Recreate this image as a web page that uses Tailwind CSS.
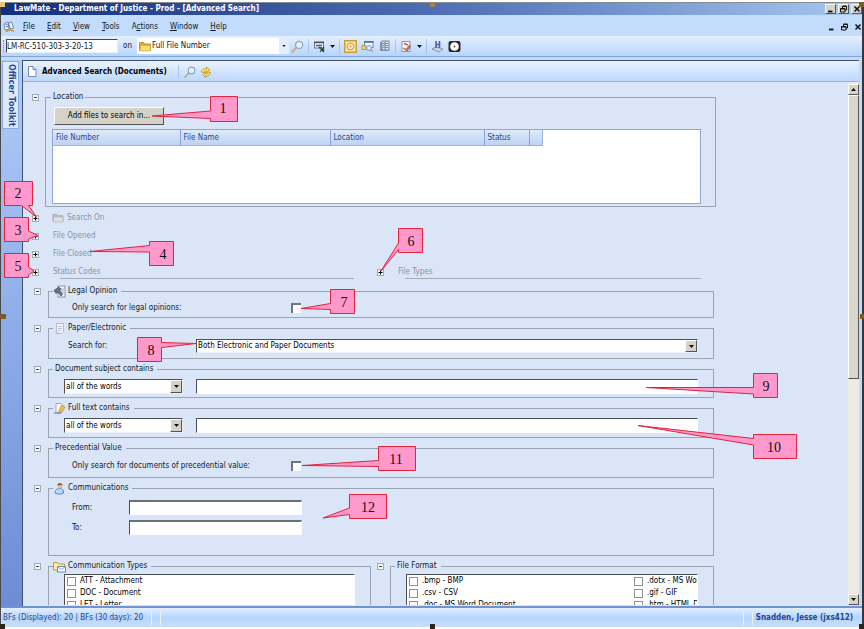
<!DOCTYPE html>
<html lang="en">
<head>
<meta charset="utf-8">
<title>LawMate - Advanced Search</title>
<script src="https://cdn.jsdelivr.net/npm/@tailwindcss/browser@4"></script>
</head>
<body class="relative flex h-screen flex-col overflow-hidden bg-white pt-[2px] pb-[2px] font-['DejaVu_Sans_Condensed','DejaVu_Sans',sans-serif] text-[8px] leading-[12px] text-[#111827]">

<svg class="hidden">
  <symbol id="minus" viewBox="0 0 7 7"><rect x=".5" y=".5" width="6" height="6" fill="#f4f6f8" stroke="#a3abb8"/><path d="M2 3.5h3" stroke="#444"/></symbol>
  <symbol id="plus" viewBox="0 0 7 7"><rect x=".5" y=".5" width="6" height="6" fill="#f4f6f8" stroke="#a3abb8"/><path d="M1.500 3.500h4M3.500 1.500v4" stroke="#000"/></symbol>
  <symbol id="folder" viewBox="0 0 12 11"><path d="M.5 9.500v-8h4l1 1.500h6v6.500z" fill="#e3a92c" stroke="#c2922f"/><path d="M1 10l.8-5.500h9.700L11 10z" fill="#ffdf78" stroke="#d9a83f" stroke-width=".7"/></symbol>
  <symbol id="lens" viewBox="0 0 12 12"><path d="M1 11l4-4" stroke="#c7b299" stroke-width="2" stroke-linecap="round"/><circle cx="7.500" cy="4.500" r="3.300" fill="#e6f3ff" stroke="#86a3cc" stroke-width="1.200"/></symbol>
  <symbol id="down" viewBox="0 0 5 3"><path d="M0 0h5L2.500 3z" fill="#111"/></symbol>
  <symbol id="restore" viewBox="0 0 8 8"><path d="M2.500 3V1.500h4v3.500H5M2.500 1h4" fill="none" stroke="#111"/><path d="M.5 3.500h4.500v3.500h-4.500zM.5 4h4.500" fill="none" stroke="#111"/></symbol>
  <symbol id="close" viewBox="0 0 8 8"><path d="M1.500 1.500l5 5M6.500 1.500l-5 5" stroke="#111" stroke-width="1.500"/></symbol>
  <symbol id="min" viewBox="0 0 8 8"><path d="M1 6.500h4.500" stroke="#111" stroke-width="1.800"/></symbol>
</svg>

<div class="flex min-h-0 flex-1 flex-col border-t border-r-2 border-l border-t-[#8a8a8a] border-r-[#33383f] border-l-[#4a4a4a] bg-[#c3daf9]">

  <header class="flex h-[12px] shrink-0 items-center justify-between bg-linear-to-r from-[#12307c] via-[#4d6db5] to-[#a9c8f0] pl-[13px]">
    <h1 class="font-bold text-white">LawMate - Department of Justice - Prod - [Advanced Search]</h1>
    <div class="flex gap-[2px]">
      <button aria-label="Minimize" class="flex h-[10px] w-[11px] items-center justify-center border border-[#f6f5f0] border-r-[#555] border-b-[#555] bg-[#d6d3ca]"><svg class="size-[8px]"><use href="#min"/></svg></button>
      <button aria-label="Restore" class="flex h-[10px] w-[11px] items-center justify-center border border-[#f6f5f0] border-r-[#555] border-b-[#555] bg-[#d6d3ca]"><svg class="size-[8px]"><use href="#restore"/></svg></button>
      <button aria-label="Close" class="flex h-[10px] w-[11px] items-center justify-center border border-[#f6f5f0] border-r-[#555] border-b-[#555] bg-[#d6d3ca]"><svg class="size-[8px]"><use href="#close"/></svg></button>
    </div>
  </header>

  <nav class="flex h-[21px] shrink-0 items-center gap-3 bg-[#c3dcfb] pt-[2px] pl-[2px]">
    <svg class="-mr-1 size-[12px]" viewBox="0 0 12 12"><path d="M1 3l4-2 1 7-4 1zM5.500 2l3-1 2 6-3 1z" fill="#fff" stroke="#4d699f" stroke-width=".8"/><path d="M2.500 4l2-.5M3 6l2-.5" stroke="#3568bd"/><path d="M3 10.500l4-2 4 2" fill="none" stroke="#c69c35" stroke-width="1.500"/></svg>
    <a href="#"><u>F</u>ile</a><a href="#"><u>E</u>dit</a><a href="#"><u>V</u>iew</a><a href="#"><u>T</u>ools</a><a href="#">A<u>c</u>tions</a><a href="#"><u>W</u>indow</a><a href="#"><u>H</u>elp</a>
    <div class="ml-auto flex gap-[5px]">
      <button aria-label="Minimize document"><svg class="size-[8px]"><use href="#min"/></svg></button>
      <button aria-label="Restore document"><svg class="size-[8px]"><use href="#restore"/></svg></button>
      <button aria-label="Close document"><svg class="size-[8px]"><use href="#close"/></svg></button>
    </div>
  </nav>

  <div class="flex h-[21px] shrink-0 items-center border-b border-[#7ba4e0] bg-linear-to-b from-[#e4f0ff] to-[#b9d5fa] pl-[2px]">
    <span class="mr-[2px] h-3 border-l border-dotted border-[#6f8fc4]"></span>
    <input aria-label="File number" value="LM-RC-510-303-3-20-13" class="h-[14px] w-[112px] border border-t-[#444] border-r-[#e8eef8] border-b-[#e8eef8] border-l-[#444] bg-white px-0">
    <label for="numtype" class="mx-[5px]">on</label>
    <div class="relative flex h-[16px] w-[152px] items-center bg-white pl-[2px]">
      <svg class="mr-[1px] h-[11px] w-[12px]"><use href="#folder"/></svg>
      <select id="numtype" class="flex-1 appearance-none bg-transparent"><option>Full File Number</option></select>
      <span class="pointer-events-none absolute right-0 flex h-full w-[10px] items-center justify-center bg-[#e2eefd]"><svg class="h-[2px] w-[4px]"><use href="#down"/></svg></span>
    </div>
    <div class="ml-[2px] flex items-center gap-[4px]">
      <button aria-label="Search" class="block"><svg class="size-[13px]"><use href="#lens"/></svg></button>
      <span class="h-[14px] w-px bg-[#a9c4ea]"></span>
      <button aria-label="Find options" class="block"><svg class="size-[13px]" viewBox="0 0 13 13"><rect x="1.500" y="2" width="9" height="6" fill="#eef4fb" stroke="#677589"/><path d="M1 2.500h10M3 5.500h6" stroke="#4b5868" stroke-width="1.500"/><path d="M6 7l5 5M11 7l-4 5M8 7v4M10.500 8v4" stroke="#32453a" stroke-width="1.200"/></svg></button>
      <svg class="h-[3px] w-[5px]"><use href="#down"/></svg>
      <span class="h-[14px] w-px bg-[#a9c4ea]"></span>
      <button aria-label="Target" class="block"><svg class="size-[13px]" viewBox="0 0 13 13"><rect x=".8" y=".8" width="11.400" height="11.400" fill="#fff3cf" stroke="#d6962d" stroke-width="1.500"/><circle cx="6.500" cy="6.500" r="3.300" fill="none" stroke="#e8a034" stroke-width="1.300"/><circle cx="6.500" cy="6.500" r="1" fill="#d88922"/></svg></button>
      <button aria-label="Find in window" class="block"><svg class="size-[13px]" viewBox="0 0 13 13"><rect x="3.500" y="1.500" width="8.500" height="6" fill="#f8fbff" stroke="#6a86bd"/><path d="M3 2h9.500" stroke="#4168b4" stroke-width="1.500"/><path d="M1 5.500h4v4H1z" fill="#f5d35b" stroke="#b28b22" stroke-width=".8"/><path d="M9 9l3 3" stroke="#c7a677" stroke-width="1.500"/><circle cx="8" cy="8" r="2.500" fill="#d9ecff" stroke="#7997c4"/></svg></button>
      <button aria-label="Records" class="block"><svg class="size-[13px]" viewBox="0 0 13 13"><rect x="2" y="2" width="8" height="9" fill="#8594aa"/><rect x="4" y="1" width="7" height="9" fill="#dce5f0" stroke="#76859c"/><path d="M5 3.500h5M5 5.500h5M5 7.500h5M7 1v9" stroke="#7d8ca3"/></svg></button>
      <span class="h-[14px] w-px bg-[#a9c4ea]"></span>
      <button aria-label="Tasks" class="block"><svg class="size-[13px]" viewBox="0 0 13 13"><rect x="2" y="1.500" width="8" height="10" fill="#f6f8fc" stroke="#8a94a8"/><path d="M4 3.500l4 1.500M3.500 8l2.500 2 4-5" fill="none" stroke="#d5592f" stroke-width="1.500"/><path d="M6.500 11.500l4-5" stroke="#4d78bf" stroke-width="1.200"/></svg></button>
      <svg class="h-[3px] w-[5px]"><use href="#down"/></svg>
      <span class="h-[14px] w-px bg-[#a9c4ea]"></span>
      <button aria-label="Hummingbird" class="block"><svg class="size-[13px]" viewBox="0 0 13 13"><path d="M1 9l4-2 7 2-4 3z" fill="#cfd5df" stroke="#7e8796" stroke-width=".8"/><path d="M5 1v7M8.500 1v7M5 4.500h3.500" stroke="#5c58a8" stroke-width="1.600"/></svg></button>
      <button aria-label="Clock" class="block"><svg class="size-[13px]" viewBox="0 0 13 13"><rect x=".5" y="1" width="12" height="11" rx="2" fill="#2d2d2d"/><circle cx="6.500" cy="6.500" r="4.300" fill="#fff"/><circle cx="6.500" cy="6.500" r="1" fill="#555"/></svg></button>
    </div>
  </div>

  <div class="flex min-h-0 flex-1 border-b-2 border-[#6f93d3] pt-[3px] pr-[3px]">
    <aside class="w-[21px] shrink-0 bg-linear-to-b from-[#b0ccfa] to-[#6c8dd5] pl-px">
      <button class="mt-px flex h-[68px] w-[17px] items-start justify-center border border-[#8eabdc] bg-[#dceafd] pt-[2px] text-[#2b4a8e]"><span class="[writing-mode:vertical-rl] font-['DejaVu_Sans',sans-serif] font-bold">Officer Toolkit</span></button>
    </aside>

    <main class="flex min-w-0 flex-1 flex-col border-t border-l border-[#40516f] bg-[#dae6f7]">
      <div class="flex h-[21px] shrink-0 items-center border-b border-[#8db4ea] bg-linear-to-b from-[#eaf3ff] to-[#bcd8fc] pt-px pl-[4px]">
        <svg class="mr-[5px] h-[11px] w-[10px]" viewBox="0 0 10 11"><path d="M1.500.5h4.500l3 3v7h-7.500z" fill="#fff" stroke="#7d8ba5"/><path d="M6 .5v3h3" fill="none" stroke="#7d8ba5"/></svg>
        <h2 class="font-bold text-black">Advanced Search (Documents)</h2>
        <span class="mr-[5px] ml-[11px] h-[13px] w-px bg-[#a9c4ea]"></span>
        <button aria-label="Run search" class="mr-[4px] block"><svg class="size-[12px]"><use href="#lens"/></svg></button>
        <button aria-label="Refresh" class="block"><svg class="size-[12px]" viewBox="0 0 12 12"><path d="M1.500 6a4 4 0 0 1 5-3.500V1l3.500 3-3.500 2.500V5A2 2 0 0 0 4 7z" fill="#ffdb5c" stroke="#b88a2b" stroke-width=".7"/><path d="M10.500 6.500a4 4 0 0 1-5 3.500v1.500L2.500 8.500 5.500 6v1.500A2 2 0 0 0 8 6z" fill="#ffd95c" stroke="#b88a2b" stroke-width=".7"/></svg></button>
      </div>

      <div class="flex min-h-0 flex-1">
        <form class="flex min-w-0 flex-1 flex-col gap-1 overflow-hidden pt-[9px] pr-[132px] pl-[9px]">

          <section class="flex items-start gap-[6px]">
            <button type="button" aria-label="Collapse Location" class="mt-[3px] block"><svg class="size-[7px]"><use href="#minus"/></svg></button>
            <fieldset class="min-w-0 flex-1 border border-[#9aa3b3]">
              <legend class="ml-[5px] h-3 px-[2px]">Location</legend>
              <div class="px-[6px] pt-[4px] pb-[2px] pr-[14px]">
                <button type="button" class="ml-[2px] h-[18px] w-[110px] border border-t-white border-r-[#555] border-b-[#555] border-l-white bg-[#d5d2c8] text-black">Add files to search in...</button>
                <div class="mt-[4px] h-[75px] border border-[#8fa6cf] bg-white">
                  <table class="w-[490px] table-fixed border-r border-b border-[#9db5dc] bg-linear-to-b from-[#dfeafa] to-[#bdd2f2] text-left text-[#24479a]">
                    <thead><tr class="h-[15px]">
                      <th class="w-[127px] pt-px pl-[3px] font-normal">File Number</th>
                      <th class="w-[150px] border-l border-[#86a2d2] pt-px pl-[3px] font-normal">File Name</th>
                      <th class="w-[154px] border-l border-[#86a2d2] pt-px pl-[3px] font-normal">Location</th>
                      <th class="w-[45px] border-l border-[#86a2d2] pt-px pl-[3px] font-normal">Status</th>
                      <th class="border-l border-[#86a2d2]"></th>
                    </tr></thead>
                  </table>
                </div>
              </div>
            </fieldset>
          </section>

          <div class="flex flex-col gap-[6px] pt-px pb-[2px] text-[#8a93a1]">
            <div class="flex items-center"><button type="button" aria-label="Expand Search On" class="mr-[13px] block"><svg class="size-[7px]"><use href="#plus"/></svg></button><svg class="mr-[3px] h-[10px] w-[12px] grayscale opacity-70"><use href="#folder"/></svg>Search On</div>
            <div class="flex items-center gap-[14px]"><button type="button" aria-label="Expand File Opened" class="block"><svg class="size-[7px]"><use href="#plus"/></svg></button>File Opened</div>
            <div class="flex items-center gap-[14px]"><button type="button" aria-label="Expand File Closed" class="block"><svg class="size-[7px]"><use href="#plus"/></svg></button>File Closed</div>
            <div class="grid grid-cols-2">
              <div class="pr-5">
                <div class="flex items-center gap-[14px]"><button type="button" aria-label="Expand Status Codes" class="block"><svg class="size-[7px]"><use href="#plus"/></svg></button>Status Codes</div>
                <hr class="ml-7 border-[#a3adbd]">
              </div>
              <div class="pr-[15px] pl-[3px]">
                <div class="flex items-center gap-[14px]"><button type="button" aria-label="Expand File Types" class="block"><svg class="size-[7px]"><use href="#plus"/></svg></button>File Types</div>
                <hr class="ml-7 border-[#a3adbd]">
              </div>
            </div>
          </div>

          <section class="flex items-start gap-[7px] px-[2px]">
            <button type="button" aria-label="Collapse Legal Opinion" class="mt-[3px] block"><svg class="size-[7px]"><use href="#minus"/></svg></button>
            <fieldset class="min-w-0 flex-1 border border-[#9aa3b3]">
              <legend class="ml-[4px] flex h-3 items-center gap-[2px] pr-1"><svg class="size-[13px]" viewBox="0 0 13 13"><rect x="5" y="1" width="7" height="11" fill="#f4f7fb" stroke="#8795aa"/><path d="M7 4h4M7 6h4M7 8h4" stroke="#9cadc5"/><path d="M1 5.500l5-3.500 2 2.500-1.500 1 3 4-1.500 1.500-3-4-2 1.500z" fill="#68717e" stroke="#3f4854" stroke-width=".7"/></svg>Legal Opinion</legend>
              <div class="flex items-center pt-[5px] pb-[3px] pl-[23px]"><label for="legal" class="w-[219px]">Only search for legal opinions:</label><input id="legal" type="checkbox" class="size-[10px] appearance-none border-t-2 border-l-2 border-[#70757c] bg-white"></div>
            </fieldset>
          </section>

          <section class="flex items-start gap-[7px] px-[2px]">
            <button type="button" aria-label="Collapse Paper/Electronic" class="mt-[3px] block"><svg class="size-[7px]"><use href="#minus"/></svg></button>
            <fieldset class="min-w-0 flex-1 border border-[#9aa3b3]">
              <legend class="ml-[4px] flex h-3 items-center gap-[2px] pr-1"><svg class="size-[13px]" viewBox="0 0 13 13"><path d="M3.500 1.500h7v8l-2 2h-5z" fill="#f7f6fd" stroke="#b6b5d4"/><path d="M5 4.500h4M5 6.500h4M5 8.500h3" stroke="#bbb9da"/><path d="M2 10h4" stroke="#d7c5dc"/></svg>Paper/Electronic</legend>
              <div class="flex items-center py-[5px] pr-[15px] pl-[19px]"><label for="paper" class="w-[128px]">Search for:</label>
                <div class="relative flex h-[14px] flex-1 border border-t-[#4b4f56] border-r-[#edf1f7] border-b-[#edf1f7] border-l-[#4b4f56] bg-white"><select id="paper" class="w-full appearance-none pl-px text-black"><option>Both Electronic and Paper Documents</option></select><span class="pointer-events-none absolute inset-y-0 right-0 flex w-[12px] items-center justify-center border border-t-white border-r-[#555] border-b-[#555] border-l-white bg-[#d5d2c8]"><svg class="h-[3px] w-[5px]"><use href="#down"/></svg></span></div>
              </div>
            </fieldset>
          </section>

          <section class="flex items-start gap-[7px] px-[2px]">
            <button type="button" aria-label="Collapse Document subject" class="mt-[3px] block"><svg class="size-[7px]"><use href="#minus"/></svg></button>
            <fieldset class="min-w-0 flex-1 border border-[#9aa3b3]">
              <legend class="ml-[4px] h-3 pr-1 pl-[2px]">Document subject contains</legend>
              <div class="flex items-center gap-[13px] pt-[4px] pb-[3px] pr-[15px] pl-[15px]">
                <div class="relative flex h-[15px] w-[119px] border border-t-[#4b4f56] border-r-[#edf1f7] border-b-[#edf1f7] border-l-[#4b4f56] bg-white"><select aria-label="Subject match" class="w-full appearance-none pl-px text-black"><option>all of the words</option></select><span class="pointer-events-none absolute inset-y-0 right-0 flex w-[12px] items-center justify-center border border-t-white border-r-[#555] border-b-[#555] border-l-white bg-[#d5d2c8]"><svg class="h-[3px] w-[5px]"><use href="#down"/></svg></span></div>
                <input aria-label="Document subject words" class="h-[15px] min-w-0 flex-1 border border-t-[#4b4f56] border-r-white border-b-white border-l-[#4b4f56] bg-white">
              </div>
            </fieldset>
          </section>

          <section class="flex items-start gap-[7px] px-[2px]">
            <button type="button" aria-label="Collapse Full text" class="mt-[3px] block"><svg class="size-[7px]"><use href="#minus"/></svg></button>
            <fieldset class="min-w-0 flex-1 border border-[#9aa3b3]">
              <legend class="ml-[4px] flex h-3 items-center gap-[2px] pr-1"><svg class="size-[13px]" viewBox="0 0 13 13"><path d="M3 1.500h5l3 3-2 6H3z" fill="#fffdf5" stroke="#a5a8b3"/><path d="M5.500 9.500L8.500 3l3.500 2.500-4 5z" fill="#f3bd55" stroke="#b98a3b" stroke-width=".7"/><path d="M1 11.500c2-2 4 1 7-.5" fill="none" stroke="#6c92cf" stroke-width="1.200"/></svg>Full text contains</legend>
              <div class="flex items-center gap-[13px] py-[4px] pr-[15px] pl-[15px]">
                <div class="relative flex h-[15px] w-[119px] border border-t-[#4b4f56] border-r-[#edf1f7] border-b-[#edf1f7] border-l-[#4b4f56] bg-white"><select aria-label="Full text match" class="w-full appearance-none pl-px text-black"><option>all of the words</option></select><span class="pointer-events-none absolute inset-y-0 right-0 flex w-[12px] items-center justify-center border border-t-white border-r-[#555] border-b-[#555] border-l-white bg-[#d5d2c8]"><svg class="h-[3px] w-[5px]"><use href="#down"/></svg></span></div>
                <input aria-label="Full text words" class="h-[15px] min-w-0 flex-1 border border-t-[#4b4f56] border-r-white border-b-white border-l-[#4b4f56] bg-white">
              </div>
            </fieldset>
          </section>

          <section class="flex items-start gap-[7px] px-[2px]">
            <button type="button" aria-label="Collapse Precedential Value" class="mt-[3px] block"><svg class="size-[7px]"><use href="#minus"/></svg></button>
            <fieldset class="min-w-0 flex-1 border border-[#9aa3b3]">
              <legend class="ml-[4px] h-3 pr-1 pl-[2px]">Precedential Value</legend>
              <div class="flex items-center pt-[6px] pb-[5px] pl-[23px]"><label for="prec" class="w-[219px]">Only search for documents of precedential value:</label><input id="prec" type="checkbox" class="size-[10px] appearance-none border-t-2 border-l-2 border-[#70757c] bg-white"></div>
            </fieldset>
          </section>

          <section class="flex items-start gap-[7px] px-[2px]">
            <button type="button" aria-label="Collapse Communications" class="mt-[3px] block"><svg class="size-[7px]"><use href="#minus"/></svg></button>
            <fieldset class="min-w-0 flex-1 border border-[#9aa3b3]">
              <legend class="ml-[4px] flex h-3 items-center gap-[2px] pr-1"><svg class="size-[13px]" viewBox="0 0 13 13"><path d="M2 11c0-4 3-4.500 5-4.500s4 1.500 3.500 4.500c-2 1.500-6 1.500-8.500 0z" fill="#b8dcff" stroke="#4d86cf"/><circle cx="7" cy="4" r="2.500" fill="#eab98c"/><path d="M4.500 3.500c0-3 5-3 5 0l-1.500-1z" fill="#5b3a22"/></svg>Communications</legend>
              <div class="flex flex-col gap-[5px] pt-[6px] pb-[20px] pl-[23px]">
                <div class="flex items-center"><label for="from" class="w-[57px]">From:</label><input id="from" class="h-[15px] w-[173px] border border-t-2 border-t-[#6b7078] border-r-white border-b-white border-l-[#4b4f56] bg-white"></div>
                <div class="flex items-center"><label for="to" class="w-[57px]">To:</label><input id="to" class="h-[15px] w-[173px] border border-t-2 border-t-[#6b7078] border-r-white border-b-white border-l-[#4b4f56] bg-white"></div>
              </div>
            </fieldset>
          </section>

          <div class="grid shrink-0 grid-cols-2">
            <section class="flex items-start gap-[7px] pr-[3px] pl-[2px]">
              <button type="button" aria-label="Collapse Communication Types" class="mt-[3px] block"><svg class="size-[7px]"><use href="#minus"/></svg></button>
              <fieldset class="min-w-0 flex-1 border border-[#9aa3b3]">
                <legend class="ml-[4px] flex h-3 items-center gap-[2px] pr-1"><svg class="size-[13px]" viewBox="0 0 13 13"><path d="M.5 10V2.500h4l1 1.500h6V10z" fill="#ffe9a0" stroke="#c59d44"/><rect x="4.500" y="6.500" width="8" height="5.500" fill="#f6f9ff" stroke="#6c8cc4"/><path d="M4.500 6.500l4 3 4-3" fill="none" stroke="#8da8d6"/></svg>Communication Types</legend>
                <div class="mr-[15px] ml-[15px] mt-[2px] h-[80px] border border-t-[#4b4f56] border-r-white border-b-white border-l-[#4b4f56] bg-white pl-[2px] text-black">
                  <label class="flex items-center gap-[4px]"><input type="checkbox" class="size-[9px] appearance-none border border-[#8c8f94]">ATT - Attachment</label>
                  <label class="flex items-center gap-[4px]"><input type="checkbox" class="size-[9px] appearance-none border border-[#8c8f94]">DOC - Document</label>
                  <label class="flex items-center gap-[4px]"><input type="checkbox" class="size-[9px] appearance-none border border-[#8c8f94]">LET - Letter</label>
                </div>
              </fieldset>
            </section>
            <section class="flex items-start gap-[6px] pr-[2px] pl-[3px]">
              <button type="button" aria-label="Collapse File Format" class="mt-[3px] block"><svg class="size-[7px]"><use href="#minus"/></svg></button>
              <fieldset class="min-w-0 flex-1 border border-[#9aa3b3]">
                <legend class="ml-[4px] h-3 pr-1 pl-[2px]">File Format</legend>
                <div class="mr-[15px] ml-[15px] mt-[2px] flex h-[80px] items-start overflow-hidden border border-t-[#4b4f56] border-r-white border-b-white border-l-[#4b4f56] bg-white pl-[2px] whitespace-nowrap text-black">
                  <div class="w-[225px] shrink-0">
                    <label class="flex items-center gap-[4px]"><input type="checkbox" class="size-[9px] appearance-none border border-[#8c8f94]">.bmp - BMP</label>
                    <label class="flex items-center gap-[4px]"><input type="checkbox" class="size-[9px] appearance-none border border-[#8c8f94]">.csv - CSV</label>
                    <label class="flex items-center gap-[4px]"><input type="checkbox" class="size-[9px] appearance-none border border-[#8c8f94]">.doc - MS Word Document</label>
                  </div>
                  <div class="shrink-0">
                    <label class="flex items-center gap-[4px]"><input type="checkbox" class="size-[9px] appearance-none border border-[#8c8f94]">.dotx - MS Word</label>
                    <label class="flex items-center gap-[4px]"><input type="checkbox" class="size-[9px] appearance-none border border-[#8c8f94]">.gif - GIF</label>
                    <label class="flex items-center gap-[4px]"><input type="checkbox" class="size-[9px] appearance-none border border-[#8c8f94]">.htm - HTML D</label>
                  </div>
                </div>
              </fieldset>
            </section>
          </div>
        </form>

        <div class="flex w-[11px] shrink-0 flex-col bg-[#ecebe6] pt-[2px]">
          <button aria-label="Scroll up" class="flex h-[11px] items-center justify-center border border-t-white border-r-[#555] border-b-[#555] border-l-white bg-[#d5d2c8]"><svg class="h-[3px] w-[5px] rotate-180"><use href="#down"/></svg></button>
          <div class="flex-[283] border border-t-white border-r-[#555] border-b-[#555] border-l-white bg-[#d9d6cc]"></div>
          <div class="flex-[216]"></div>
          <button aria-label="Scroll down" class="flex h-[11px] items-center justify-center border border-t-white border-r-[#555] border-b-[#555] border-l-white bg-[#d5d2c8]"><svg class="h-[3px] w-[5px]"><use href="#down"/></svg></button>
        </div>
      </div>
      <div class="h-px shrink-0 bg-[#dae6f7]"></div>
    </main>
  </div>

  <footer class="flex h-[19px] shrink-0 items-center bg-linear-to-b from-[#e3efff] via-[#b7d5fb] to-[#c6defb] pl-[2px] text-[#1e4595]">
    <span>BFs (Displayed): 20 | BFs (30 days): 20</span>
    <span class="ml-[8px] h-[14px] w-[10px] border-x border-[#e9f3ff]"></span>
    <span class="ml-auto h-[14px] w-[10px] border-x border-[#e9f3ff]"></span>
    <span class="mr-[9px] ml-[3px] font-bold">Snadden, Jesse (jxs412)</span>
  </footer>
</div>

<!-- Numbered callouts and selection handles laid over the window -->
<svg class="pointer-events-none absolute top-0 left-0 h-[629px] w-[864px] font-['Liberation_Serif',serif] text-[14px]" viewBox="0 0 864 629">
  <g fill="#7a5a28"><path d="M0 2h5v5H0z" fill="#e2c878"/><path d="M430 2h5v5h-5z" fill="#9c8355"/><path d="M859 2h5v5h-5z"/><path d="M0 314h6v5H0z"/><path d="M860 314h4v5h-4z"/><path d="M0 624h5v5H0zM430 624h5v5h-5zM859 624h5v5h-5z" fill="#2c241a"/></g>
  <g fill="#ff99cc" stroke="#e3223c" stroke-width="1">
    <path d="M210.500 96.500h27v25h-27v-3L152 116l58.500-5z"/>
    <path d="M4.500 181.500h28v24h-4L36.500 217l-15-11.500h-17z"/>
    <path d="M4.500 217.500h24v13.500L38 235.500 28.500 239v2.500h-24z"/>
    <path d="M149.500 241.500h24v24h-24V252L90 251.500l59.500-6z"/>
    <path d="M4.500 253.500h24v13.500L34 271l-5.500 4v2.500h-24z"/>
    <path d="M398.500 228.500h24v24h-24v-3L381 271l17.500-28z"/>
    <path d="M330.500 289.500h24v24h-24v-4L301 308.500l29.500-5z"/>
    <path d="M137.500 337.500h24v5L196 343.500l-34.500 4v14h-24z"/>
    <path d="M753.500 373.500h24v24h-24V394L646 387.500h107.500z"/>
    <path d="M753.500 434.500h43v24h-43V445L638 425.500l115.500 13z"/>
    <path d="M378.500 446.500h37v24h-37v-4L302 465.500l76.500-5z"/>
    <path d="M349.500 494.500h37v24h-37v-4L323 518l26.500-10z"/>
  </g>
  <g text-anchor="middle" fill="#111">
    <text x="223" y="113">1</text><text x="18" y="198">2</text><text x="18" y="235">3</text><text x="163" y="259">4</text><text x="18" y="271">5</text><text x="411" y="246">6</text><text x="344" y="307">7</text><text x="151" y="355">8</text><text x="766" y="391">9</text><text x="774" y="452">10</text><text x="396" y="464">11</text><text x="368" y="512">12</text>
  </g>
</svg>
</body>
</html>
